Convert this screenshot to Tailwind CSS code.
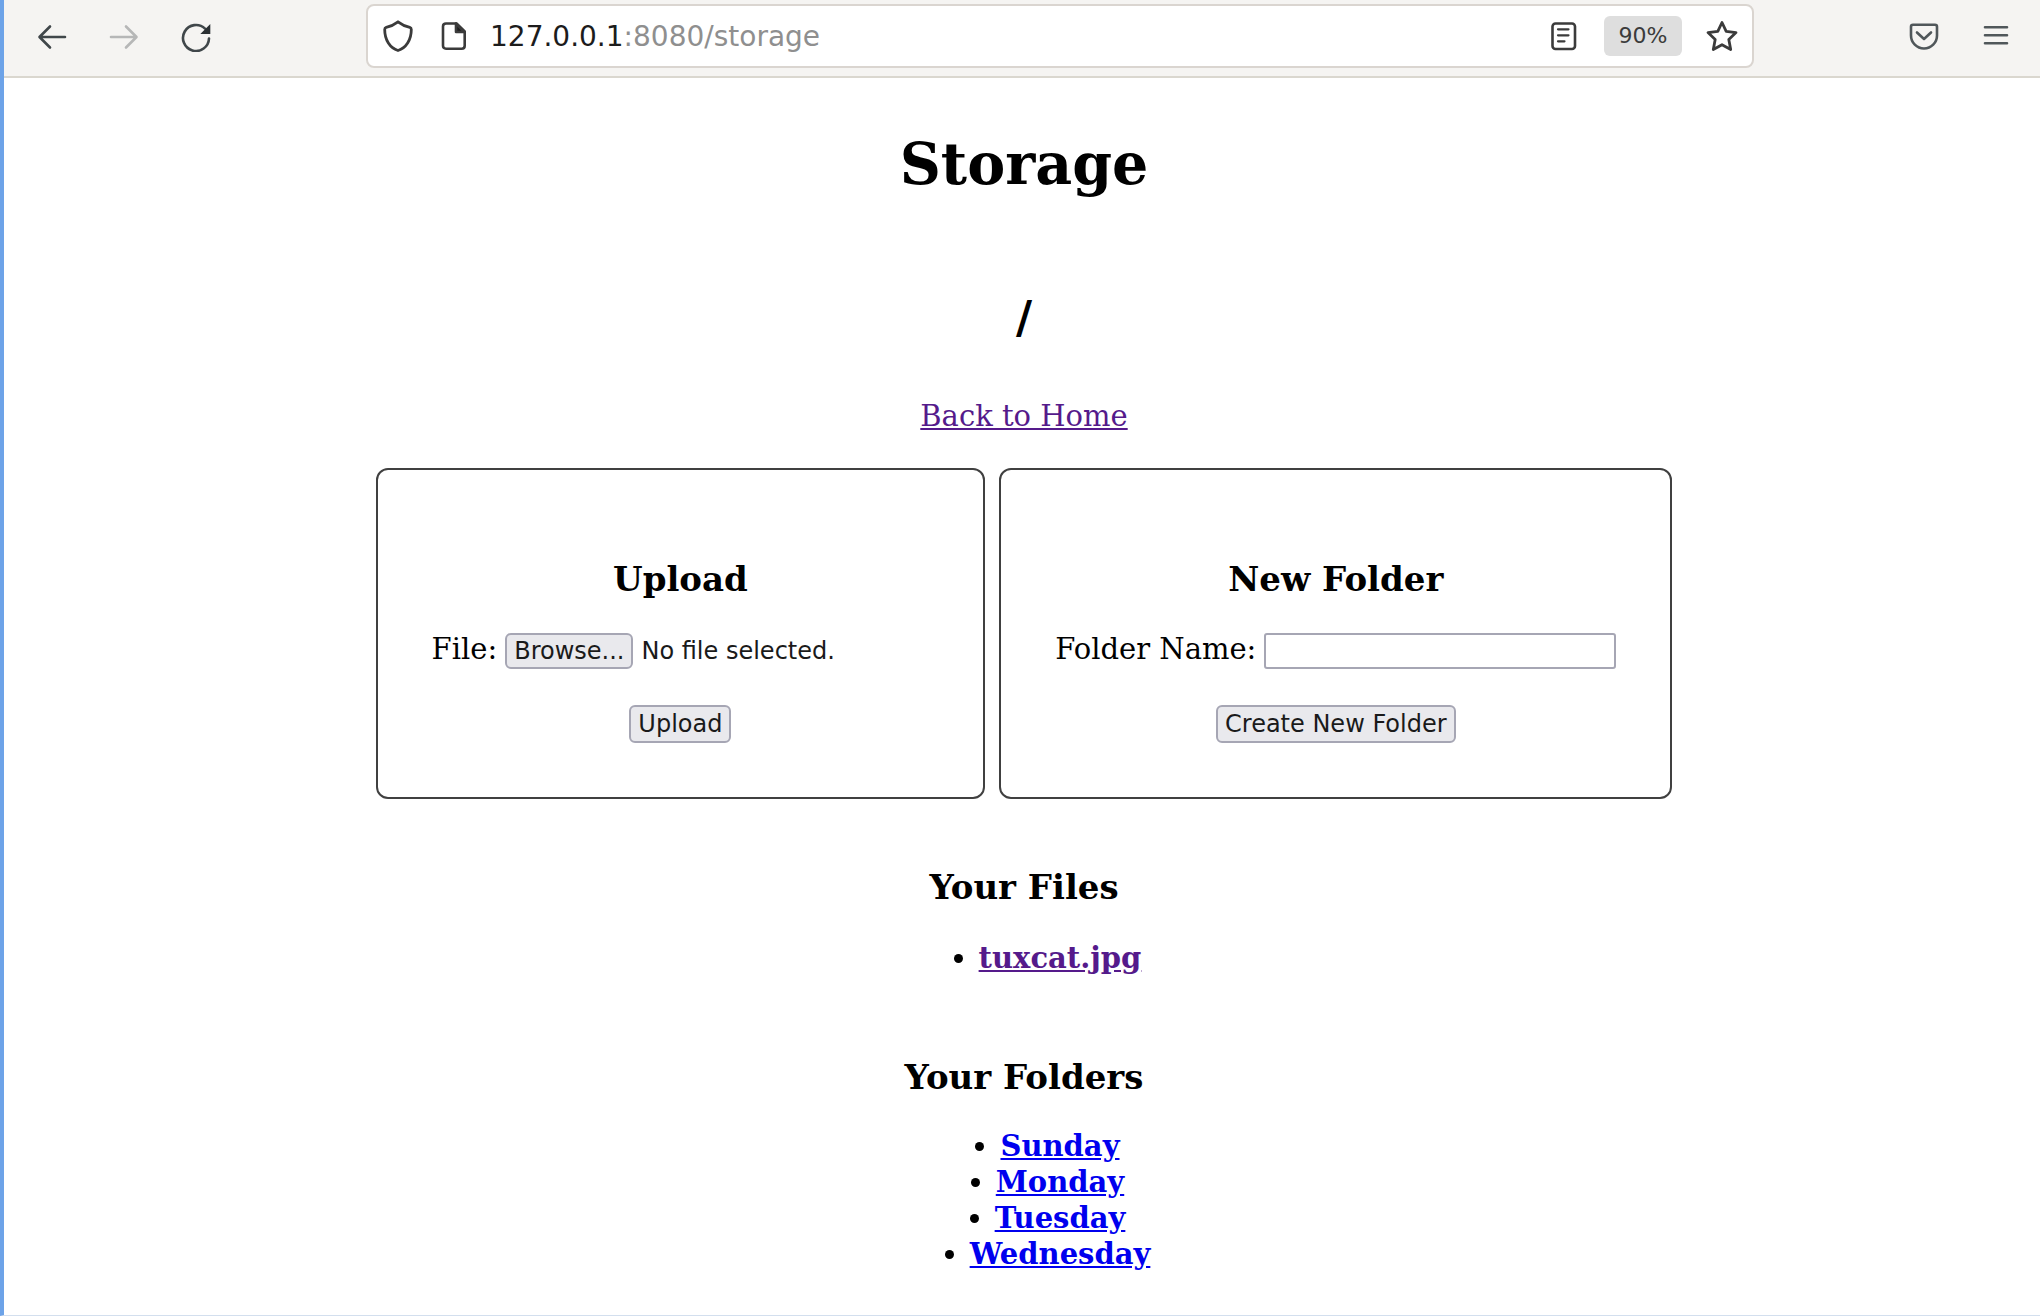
<!DOCTYPE html>
<html lang="en">
<head>
<meta charset="utf-8">
<meta name="viewport" content="width=device-width, initial-scale=1">
<title>Storage</title>
<script src="https://cdn.jsdelivr.net/npm/@tailwindcss/browser@4"></script>
</head>
<body class="flex min-h-screen flex-col border-b border-l-4 border-b-[#d3dfee] border-l-[#6da3e8] bg-white font-['DejaVu_Serif',serif] text-[29px] leading-9 text-black">

<!-- Browser toolbar -->
<header class="flex h-[78px] w-full items-start border-b-2 border-[#dad7cf] bg-[#f5f4f2] pt-1 pr-2 pl-3 font-['DejaVu_Sans',sans-serif] text-[#40474a]">
  <nav class="flex" aria-label="History">
    <button type="button" aria-label="Back" class="flex h-16 w-[72px] items-center justify-center">
      <svg class="size-8" viewBox="0 0 32 32" fill="none" stroke="currentColor" stroke-width="2.6" stroke-linecap="round" stroke-linejoin="round"><path d="M29 17H4M14 6.500 3.500 17 14 27.500"/></svg>
    </button>
    <button type="button" aria-label="Forward" disabled class="flex h-16 w-[72px] items-center justify-center text-[#b6b7b7]">
      <svg class="size-8" viewBox="0 0 32 32" fill="none" stroke="currentColor" stroke-width="2.6" stroke-linecap="round" stroke-linejoin="round"><path d="M3 17H28M18 6.500 28.500 17 18 27.500"/></svg>
    </button>
    <button type="button" aria-label="Reload" class="flex h-16 w-[72px] items-center justify-center">
      <svg class="size-8" viewBox="0 0 32 32" fill="none" stroke="currentColor" stroke-width="2.6" stroke-linecap="round"><path d="M29 18.500A13 13 0 1 1 25 8.600"/><path d="M30.300 4V14H20.300Z" fill="#2b3033" stroke="none"/></svg>
    </button>
  </nav>

  <div class="mx-[134px] flex h-16 flex-1 items-center rounded-lg border-2 border-[#dad5d0] bg-white px-0.5 text-[#3b3b3b]">
    <button type="button" aria-label="Tracking protection" class="flex h-12 w-14 items-center justify-center">
      <svg class="size-8" viewBox="0 0 32 32" fill="none" stroke="currentColor" stroke-width="2.8" stroke-linejoin="round"><path d="M16 1.800C19.500 4.500 24 6.500 27.800 7.300Q29.300 7.700 29.300 9.500C29.300 20 24 28 16 30.500C8 28 2.700 20 2.700 9.500Q2.700 7.700 4.200 7.300C8 6.500 12.500 4.500 16 1.800Z"/></svg>
    </button>
    <button type="button" aria-label="Site information" class="flex h-12 w-14 items-center justify-center">
      <svg class="size-8" viewBox="0 0 32 32" fill="none" stroke="currentColor" stroke-width="2.6" stroke-linejoin="round"><path d="M8 3.500H18.500L26.700 11.500V25.700Q26.700 28.700 23.700 28.700H8Q5 28.700 5 25.700V6.500Q5 3.500 8 3.500Z"/><path d="M18 3.500V12H26.500Z" fill="#1d1d1d"/></svg>
    </button>
    <div role="textbox" contenteditable="true" spellcheck="false" aria-label="Address" class="flex-1 pt-0.5 pl-2 text-[28px] whitespace-nowrap text-[#8f8f8f] outline-none"><span class="text-[#1c1c1c]">127.0.0.1</span>:8080/storage</div>
    <button type="button" aria-label="Reader view" class="mr-3 flex h-12 w-14 items-center justify-center">
      <svg class="size-8" viewBox="0 0 32 32" fill="none" stroke="currentColor" stroke-width="2.6" stroke-linecap="round"><rect x="4.500" y="3.500" width="22.500" height="25.500" rx="3"/><path d="M10 9.300H20.500M10 15.300H20.500M10 21.300H16.500" stroke-width="2.200"/></svg>
    </button>
    <button type="button" aria-label="Reset zoom level" class="mr-3 h-10 w-[78px] rounded-md bg-[#dedede] text-[22px]">90%</button>
    <button type="button" aria-label="Bookmark this page" class="flex h-12 w-14 items-center justify-center">
      <svg class="size-8" viewBox="0 0 32 32" fill="none" stroke="currentColor" stroke-width="2.8" stroke-linejoin="round"><path d="M16 2.500 20.200 11.300 30 12.600 22.800 19.400 24.700 29.500 16 24.700 7.300 29.500 9.200 19.400 2 12.600 11.800 11.300Z"/></svg>
    </button>
  </div>

  <button type="button" aria-label="Save to Pocket" class="flex h-16 w-[72px] items-center justify-center text-[#50575a]">
    <svg class="size-8" viewBox="0 0 32 32" fill="none" stroke="currentColor" stroke-width="2.6" stroke-linecap="round" stroke-linejoin="round"><path d="M5 4.800H27Q29 4.800 29 6.800V15.500A13 13 0 0 1 3 15.500V6.800Q3 4.800 5 4.800Z"/><path d="M9 12.500 16 19 23 12.500"/></svg>
  </button>
  <button type="button" aria-label="Open application menu" class="flex h-16 w-[72px] items-center justify-center text-[#50575a]">
    <svg class="size-8" viewBox="0 0 32 32" fill="none" stroke="currentColor" stroke-width="2.6" stroke-linecap="round"><path d="M5 7.200H27M5 15.200H27M5 23.200H27"/></svg>
  </button>
</header>

<!-- Storage page -->
<main class="flex flex-1 flex-col items-center pt-[52px] pb-10 pl-1">
  <h1 class="text-[57px] leading-[68px] font-bold">Storage</h1>
  <h2 class="mt-[94px] text-[44px] leading-[52px] font-bold">/</h2>
  <a href="#home" class="mt-[54px] text-[#551a8b] underline">Back to Home</a>

  <div class="mt-[34px] flex gap-3.5">
    <form class="flex flex-col items-center rounded-xl border-2 border-[#404040] p-[54px]" onsubmit="return false">
      <h3 class="mt-[35px] text-[34px] leading-10 font-bold">Upload</h3>
      <div class="mt-8 flex h-[38px] items-end">
        <label for="file" class="mr-2 self-start">File:</label>
        <div class="flex w-[424px] items-center font-['DejaVu_Sans',sans-serif] text-2xl leading-8 text-[#1a1a1a]">
          <input id="file" type="file" class="sr-only" tabindex="-1">
          <button type="button" class="mr-2 h-9 rounded-md border-2 border-[#a6a6b4] bg-[#e9e9ed] px-[7px]" onclick="document.getElementById('file').click()">Browse...</button>
          <span>No file selected.</span>
        </div>
      </div>
      <button type="submit" class="mt-9 h-[38px] rounded-md border-2 border-[#a6a6b4] bg-[#e9e9ed] px-[7px] font-['DejaVu_Sans',sans-serif] text-2xl text-[#1a1a1a]">Upload</button>
    </form>

    <form class="flex flex-col items-center rounded-xl border-2 border-[#404040] p-[54px]" onsubmit="return false">
      <h3 class="mt-[35px] text-[34px] leading-10 font-bold">New Folder</h3>
      <div class="mt-8 flex h-[38px] items-end">
        <label for="folder" class="mr-2 self-start">Folder Name:</label>
        <input id="folder" type="text" class="h-9 w-[352px] rounded-[3px] border-2 border-[#a6a6b4] bg-white px-1 font-['DejaVu_Sans',sans-serif] text-2xl">
      </div>
      <button type="submit" class="mt-9 h-[38px] rounded-md border-2 border-[#a6a6b4] bg-[#e9e9ed] px-[7px] font-['DejaVu_Sans',sans-serif] text-2xl text-[#1a1a1a]">Create New Folder</button>
    </form>
  </div>

  <h3 class="mt-[68px] text-[34px] leading-10 font-bold">Your Files</h3>
  <ul class="mt-[33px] flex list-disc flex-col items-center pl-[72px] font-bold">
    <li><a href="#tuxcat.jpg" class="text-[#551a8b] underline">tuxcat.jpg</a></li>
  </ul>

  <h3 class="mt-[81px] text-[34px] leading-10 font-bold">Your Folders</h3>
  <ul class="mt-[31px] flex list-disc flex-col items-center pl-[72px] font-bold">
    <li><a href="#sunday" class="text-[#0000ee] underline">Sunday</a></li>
    <li><a href="#monday" class="text-[#0000ee] underline">Monday</a></li>
    <li><a href="#tuesday" class="text-[#0000ee] underline">Tuesday</a></li>
    <li><a href="#wednesday" class="text-[#0000ee] underline">Wednesday</a></li>
  </ul>
</main>
</body>
</html>
